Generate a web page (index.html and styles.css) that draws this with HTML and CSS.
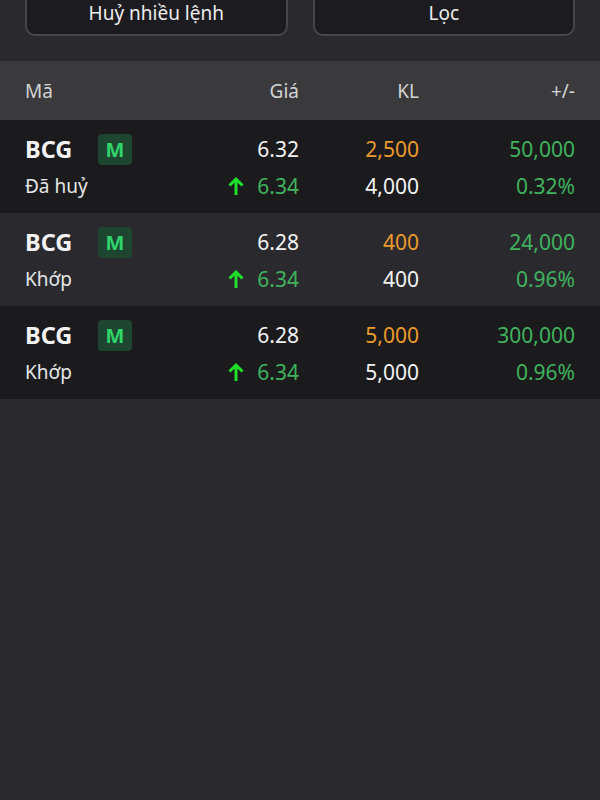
FILE: index.html
```html
<!DOCTYPE html>
<html lang="vi">
<head>
    <meta charset="UTF-8">
    <title>Sổ lệnh</title>
    <link rel="stylesheet" href="styles.css">
</head>
<body>
    <div class="toolbar">
        <button type="button" class="tool-btn">Huỷ nhiều lệnh</button>
        <button type="button" class="tool-btn">Lọc</button>
    </div>
    <div class="table-head">
        <span class="col-sym">Mã</span>
        <span class="col-num">Giá</span>
        <span class="col-num">KL</span>
        <span class="col-num">+/-</span>
    </div>

    <div class="order dark">
        <div class="sym-line"><span class="sym">BCG</span><span class="badge">M</span></div>
        <span class="col-num">6.32</span>
        <span class="col-num orange">2,500</span>
        <span class="col-num green">50,000</span>
        <span class="status">Đã huỷ</span>
        <span class="col-num green match"><svg class="arrow" viewBox="0 0 18 20"><path d="M9 19V3M2.5 9.5L9 3l6.5 6.5"/></svg>6.34</span>
        <span class="col-num">4,000</span>
        <span class="col-num green">0.32%</span>
    </div>

    <div class="order">
        <div class="sym-line"><span class="sym">BCG</span><span class="badge">M</span></div>
        <span class="col-num">6.28</span>
        <span class="col-num orange">400</span>
        <span class="col-num green">24,000</span>
        <span class="status">Khớp</span>
        <span class="col-num green match"><svg class="arrow" viewBox="0 0 18 20"><path d="M9 19V3M2.5 9.5L9 3l6.5 6.5"/></svg>6.34</span>
        <span class="col-num">400</span>
        <span class="col-num green">0.96%</span>
    </div>

    <div class="order dark">
        <div class="sym-line"><span class="sym">BCG</span><span class="badge">M</span></div>
        <span class="col-num">6.28</span>
        <span class="col-num orange">5,000</span>
        <span class="col-num green">300,000</span>
        <span class="status">Khớp</span>
        <span class="col-num green match"><svg class="arrow" viewBox="0 0 18 20"><path d="M9 19V3M2.5 9.5L9 3l6.5 6.5"/></svg>6.34</span>
        <span class="col-num">5,000</span>
        <span class="col-num green">0.96%</span>
    </div>
</body>
</html>
```

FILE: styles.css
```css
body {
    margin: 0;
    height: 100vh;
    background-color: #2a2a2e;
    color: #f2f2f2;
    font-family: "Noto Sans", "Open Sans", sans-serif;
    overflow: hidden;
}
.toolbar {
    display: grid;
    grid-template-columns: 1fr 1fr;
    gap: 25px;
    padding: 0 25px 25px;
}
.tool-btn {
    margin-top: -20px;
    height: 56px;
    padding: 10px 0 0;
    background-color: #1c1c20;
    border: 2px solid #45454a;
    border-radius: 10px;
    color: #ececec;
    font-family: inherit;
    font-size: 19px;
    line-height: 24px;
}
.table-head,
.order {
    display: grid;
    grid-template-columns: 164px 110px 120px 156px;
    padding: 0 25px;
    align-items: center;
}
.table-head {
    height: 59px;
    background-color: #3a3a3d;
    color: #d4d4d4;
    font-size: 19px;
}
.order {
    grid-auto-rows: 37px;
    padding: 10px 25px 9px;
    font-size: 21px;
}
.order.dark {
    background-color: #1b1b1e;
}
.col-num {
    text-align: right;
}
.sym-line {
    display: flex;
    align-items: center;
}
.sym {
    width: 73px;
    font-size: 23.5px;
    font-weight: 700;
}
.badge {
    width: 34px;
    height: 31px;
    margin-top: 2px;
    border-radius: 4px;
    background-color: #1e4530;
    color: #2fd46a;
    font-size: 20px;
    font-weight: 700;
    line-height: 31px;
    text-align: center;
}
.status {
    font-size: 19px;
    color: #e6e6e6;
}
.orange {
    color: #ec9a2c;
}
.green {
    color: #3fb35c;
}
.match {
    display: flex;
    justify-content: flex-end;
    align-items: center;
}
.arrow {
    width: 18px;
    height: 20px;
    margin-right: 12px;
    fill: none;
    stroke: #1ee02a;
    stroke-width: 3;
}
```
